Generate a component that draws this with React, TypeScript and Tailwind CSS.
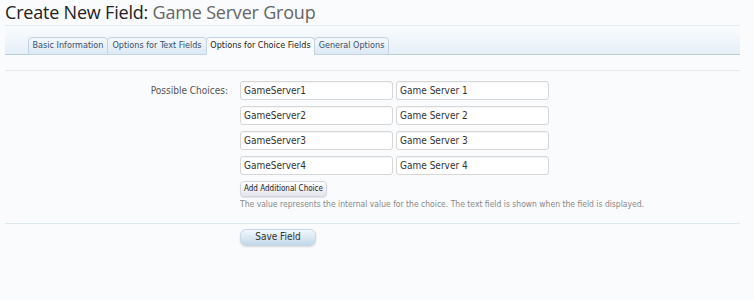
const small = "font-['DejaVu_Sans_Condensed',Tahoma,sans-serif]";

const tabs = [
  { label: 'Basic Information', w: 'w-[80px]' },
  { label: 'Options for Text Fields', w: 'w-[100px]' },
  { label: 'Options for Choice Fields', w: 'w-[109px]', active: true },
  { label: 'General Options', w: 'w-[75px]' },
];

const choices = [
  ['GameServer1', 'Game Server 1'],
  ['GameServer2', 'Game Server 2'],
  ['GameServer3', 'Game Server 3'],
  ['GameServer4', 'Game Server 4'],
];

function TextBox({ value }: { value: string }) {
  return (
    <div className="w-[153px] h-[19px] bg-white border border-[#d7d7d7] rounded-[3px] px-[3px] flex items-center text-[10px] text-[#333] shadow-[inset_0_1px_1px_rgba(0,0,0,0.04)]">
      {value}
    </div>
  );
}

export default function App() {
  return (
    <div className={`w-[754px] h-[300px] bg-[#fafbfd] overflow-hidden ${small}`}>
      <h1 className="pl-[5px] pt-[1px] h-[25px] text-[18px] leading-[22px] text-[#222] font-['Open_Sans',sans-serif] tracking-[-0.2px]">
        Create New Field: <span className="text-[#666]">Game Server Group</span>
      </h1>

      {/* tab strip */}
      <div className="ml-[5px] mr-[14px] border-t border-[#e4ecf3] bg-gradient-to-b from-[#fafcfe] to-[#e6eff7] h-[30px] flex items-end pl-[23px] border-b border-b-[#b9cbdc]">
        {tabs.map(t => (
          <div
            key={t.label}
            className={`${t.w} h-[18px] -mb-px flex items-center justify-center whitespace-nowrap text-[9px] border border-[#c4d3e2] rounded-t-[4px] -ml-px first:ml-0 ${
              t.active
                ? 'bg-[#fafbfd] text-[#222] border-b-[#fafbfd]'
                : 'bg-gradient-to-b from-[#f4f8fc] to-[#dde9f4] text-[#3a4d6a]'
            }`}
          >
            {t.label}
          </div>
        ))}
      </div>

      <div className="ml-[5px] mr-[14px] mt-[15px] border-t border-[#e2eaf0]" />

      <div className="flex mt-[10px]">
        <div className="w-[228px] text-right text-[10px] text-[#555] pt-[2px]">Possible Choices:</div>
        <div className="ml-[12px] flex flex-col">
          <div className="flex flex-col gap-[6px]">
            {choices.map(([a, b]) => (
              <div key={a} className="flex gap-[3px]">
                <TextBox value={a} />
                <TextBox value={b} />
              </div>
            ))}
          </div>
          <button className="mt-[6px] self-start h-[16px] px-[3px] text-[8px] text-[#222] rounded-[4px] border border-[#d5d5dd] bg-gradient-to-b from-[#ffffff] to-[#e4e4ec] shadow-[0_1px_1px_rgba(0,0,0,0.1)] leading-none whitespace-nowrap">
            Add Additional Choice
          </button>
          <div className="mt-[1px] text-[8.5px] text-[#888] whitespace-nowrap">
            The value represents the internal value for the choice. The text field is shown when the field is displayed.
          </div>
        </div>
      </div>

      <div className="ml-[5px] mr-[14px] mt-[12px] border-t border-[#dde7ee]" />

      <div className="flex pl-[240px] mt-[5px]">
        <button className="w-[76px] h-[17px] text-[10px] text-[#333] rounded-[6px] border border-[#c8d8e6] bg-gradient-to-b from-[#f2f8fc] to-[#c2d8e8] shadow-[0_1px_2px_rgba(0,0,0,0.15)] leading-none">
          Save Field
        </button>
      </div>
    </div>
  );
}
